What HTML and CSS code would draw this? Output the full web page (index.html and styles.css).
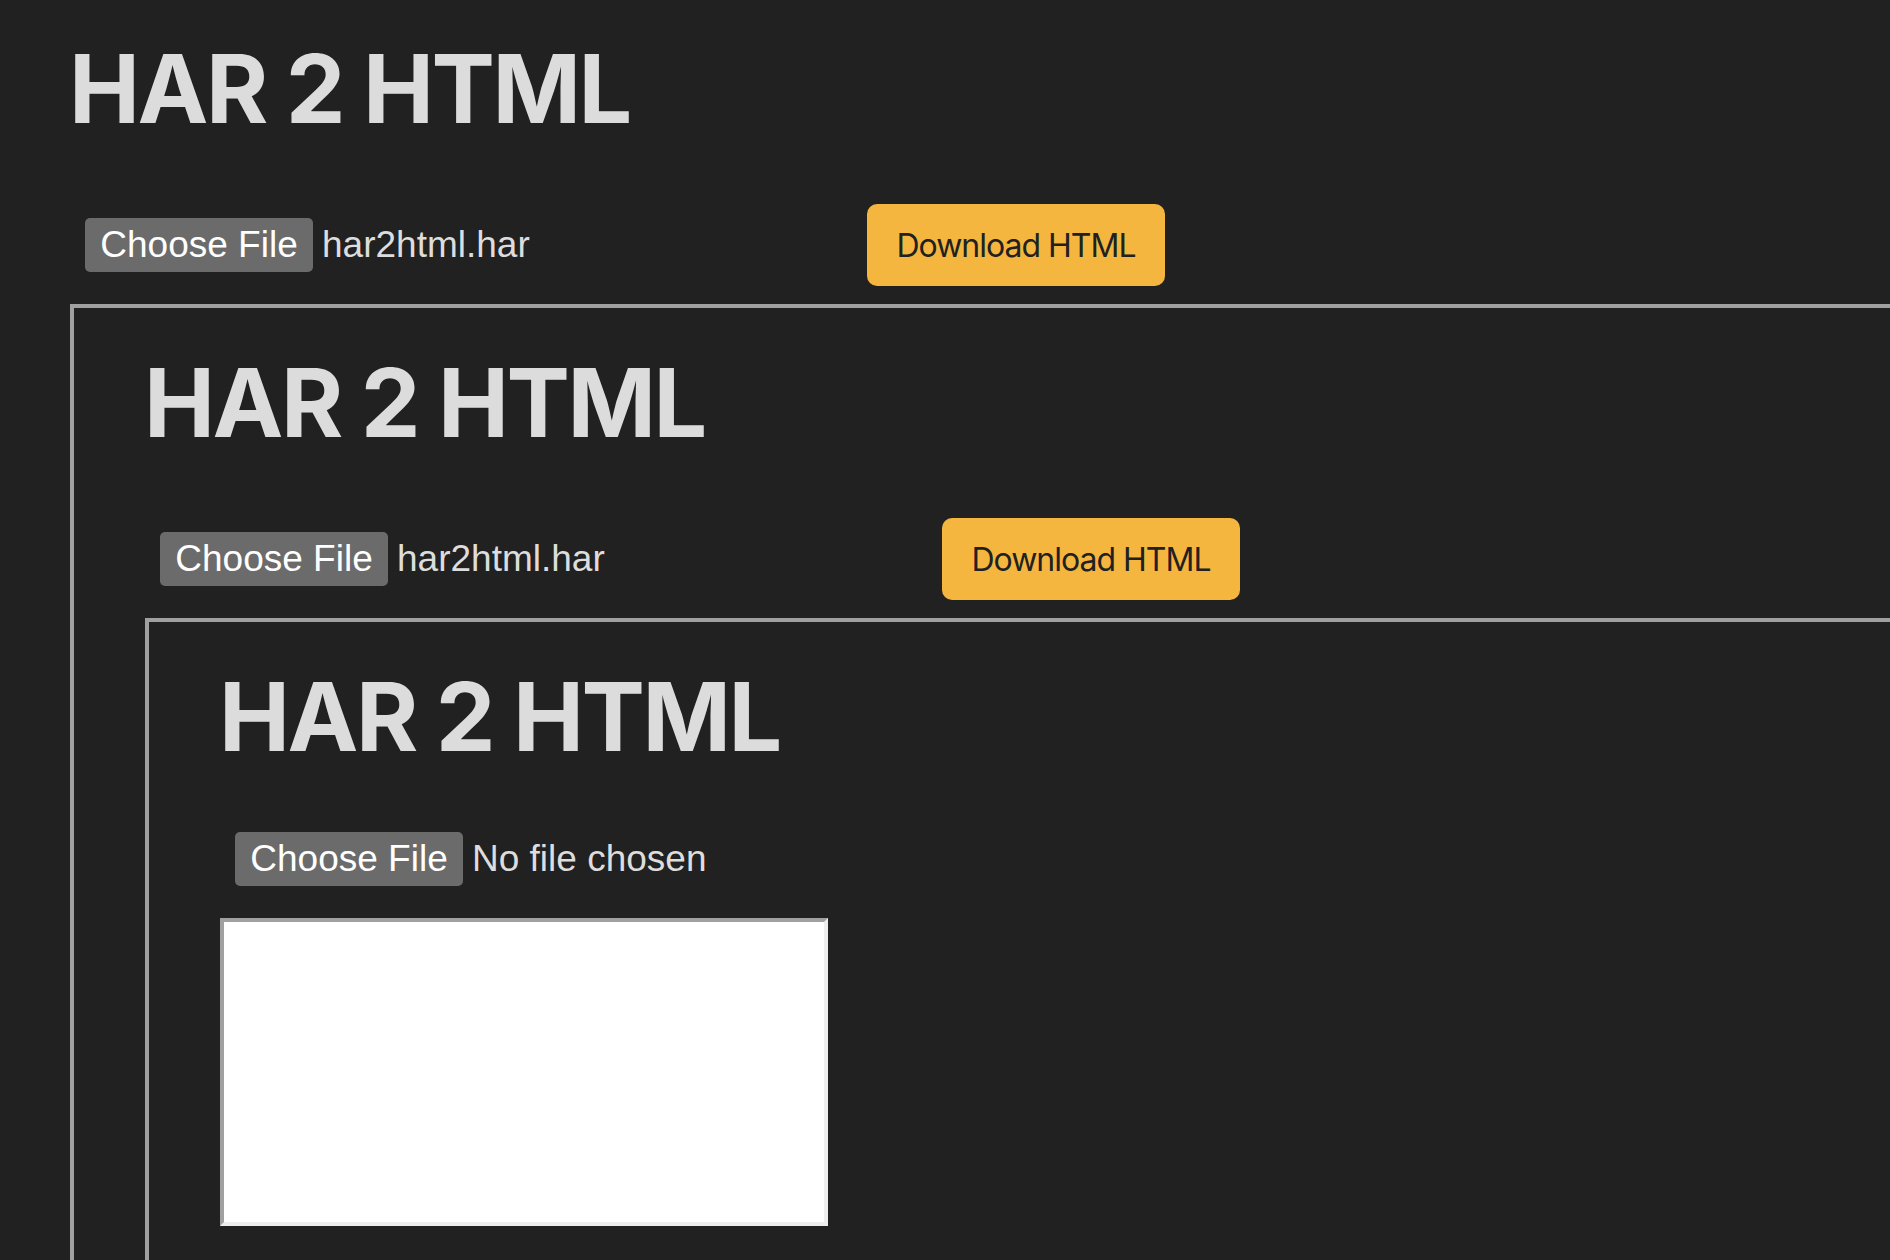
FILE: index.html
```html
<!DOCTYPE html>
<html lang="en">
<head>
<meta charset="utf-8">
<title>HAR 2 HTML</title>
<link rel="stylesheet" href="styles.css">
</head>
<body>
<div class="app app-top">
  <h1 class="title">HAR 2 HTML</h1>
  <div class="controls">
    <div class="file"><span class="choose">Choose File</span><span class="fname">har2html.har</span></div>
    <button class="download" type="button">Download HTML</button>
  </div>
  <div class="frame frame-open">
    <div class="app">
      <h1 class="title">HAR 2 HTML</h1>
      <div class="controls">
        <div class="file"><span class="choose">Choose File</span><span class="fname">har2html.har</span></div>
        <button class="download" type="button">Download HTML</button>
      </div>
      <div class="frame frame-open">
        <div class="app">
          <h1 class="title">HAR 2 HTML</h1>
          <div class="controls controls-empty">
            <div class="file"><span class="choose">Choose File</span><span class="fname">No file chosen</span></div>
          </div>
          <div class="frame frame-blank"></div>
        </div>
      </div>
    </div>
  </div>
</div>
</body>
</html>
```
FILE: styles.css
```css
html, body {
  margin: 0;
  padding: 0;
  background: #212121;
  overflow: hidden;
  height: 100%;
}

.app {
  display: flex;
  flex-direction: column;
  align-items: flex-start;
  flex: 1;
  min-height: 0;
}

.app-top {
  margin-top: -6px;
  margin-left: -1px;
  height: calc(100% + 6px);
}

.title {
  margin: 47px 0 0 70px;
  font-family: Inter, "Noto Sans", sans-serif;
  font-weight: 700;
  font-size: 95px;
  line-height: 95px;
  letter-spacing: -2.5px;
  color: #dcdcdc;
  white-space: nowrap;
}

.controls {
  display: flex;
  align-items: center;
  margin: 68px 0 0 86px;
  height: 82px;
  flex-shrink: 0;
}

.controls-empty {
  height: 54px;
}

.file {
  width: 782px;
  display: flex;
  align-items: center;
  gap: 9px;
  font-family: "Liberation Sans", Arial, sans-serif;
  font-size: 37px;
}

.choose {
  display: flex;
  align-items: center;
  justify-content: center;
  width: 228px;
  height: 54px;
  background: #6b6b6b;
  color: #ffffff;
  border-radius: 5px;
}

.fname {
  color: #dddddd;
  white-space: nowrap;
}

.download {
  width: 298px;
  height: 82px;
  padding: 0;
  border: none;
  border-radius: 10px;
  background: #f5b63f;
  color: #212121;
  font-family: Inter, "Noto Sans", sans-serif;
  font-size: 32px;
  letter-spacing: -1px;
  cursor: pointer;
}

.frame {
  margin: 18px 0 0 71px;
  border: 4px solid;
  border-color: #a0a0a0 #eeeeee #eeeeee #a0a0a0;
  overflow: hidden;
  flex-shrink: 0;
}

.frame-open {
  display: flex;
  flex-direction: column;
  align-self: stretch;
  flex: 1;
  min-height: 0;
  border-right: 0;
  border-bottom: 0;
}

.frame-blank {
  margin-top: 32px;
  width: 600px;
  height: 300px;
  background: #ffffff;
}
```
